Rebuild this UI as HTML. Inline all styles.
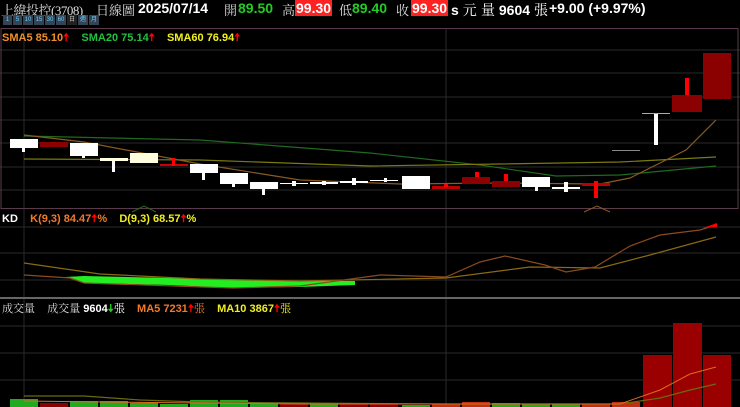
<!DOCTYPE html><html><head><meta charset="utf-8"><style>
body{margin:0;background:#000;width:740px;height:407px;overflow:hidden;font-family:"Liberation Sans","Noto Sans CJK TC",sans-serif}
.t{position:absolute;white-space:nowrap;font-weight:bold}
.c{font-family:"Noto Serif CJK SC","Noto Sans CJK TC",serif;font-weight:normal}
.b{display:inline-block;background:#345;color:#6cf;font-size:6px;height:10px;line-height:10px;text-align:center;width:10px}
</style></head><body>
<svg width="740" height="407" style="position:absolute;left:0;top:0">
<g stroke="#2a2a2a" stroke-width="1">
<line x1="0" y1="50" x2="740" y2="50"/><line x1="0" y1="73" x2="740" y2="73"/><line x1="0" y1="97" x2="740" y2="97"/><line x1="0" y1="120" x2="740" y2="120"/><line x1="0" y1="143" x2="740" y2="143"/><line x1="0" y1="167" x2="740" y2="167"/><line x1="0" y1="190" x2="740" y2="190"/>
<line x1="0" y1="227" x2="740" y2="227"/><line x1="0" y1="253" x2="740" y2="253"/><line x1="0" y1="280" x2="740" y2="280"/>
<line x1="0" y1="326" x2="740" y2="326"/><line x1="0" y1="353" x2="740" y2="353"/><line x1="0" y1="380" x2="740" y2="380"/>
<line x1="24" y1="29" x2="24" y2="407"/><line x1="446" y1="29" x2="446" y2="407"/>
</g>
<rect x="1" y="28.5" width="737" height="180" fill="none" stroke="#5a3a4a"/>
<line x1="0" y1="298" x2="740" y2="298" stroke="#666" stroke-width="2"/>
<polyline fill="none" stroke="#1f6a1f" stroke-width="1.2" points="24,136 200,140 370,153 480,165 556,176 620,175 716,166"/>
<polyline fill="none" stroke="#7a7a10" stroke-width="1.2" points="24,159 200,160 370,166 500,164 620,162 716,157"/>
<polyline fill="none" stroke="#8a5a20" stroke-width="1.2" points="24,135 84,142 200,164 300,180 400,184 500,183 600,184 630,178 686,150 716,120"/>
<g fill="#fff">
<rect x="10" y="139" width="28" height="9"/><rect x="22" y="148" width="3" height="4"/>
<rect x="70" y="143" width="28" height="13"/><rect x="82" y="156" width="3" height="2"/>
<rect x="100" y="158" width="28" height="3" fill="#ffffe0"/><rect x="112" y="161" width="3" height="11"/>
<rect x="130" y="153" width="28" height="10" fill="#ffffe0"/>
<rect x="190" y="164" width="28" height="9"/><rect x="202" y="173" width="3" height="7"/>
<rect x="220" y="173" width="28" height="11"/><rect x="232" y="184" width="3" height="3"/>
<rect x="250" y="182" width="28" height="7"/><rect x="262" y="189" width="3" height="6"/>
<rect x="280" y="183" width="28" height="1"/><rect x="292" y="181" width="4" height="5"/>
<rect x="310" y="182" width="28" height="2"/><rect x="322" y="181" width="4" height="4"/>
<rect x="340" y="181" width="28" height="2"/><rect x="352" y="178" width="4" height="7"/>
<rect x="370" y="180" width="28" height="1"/><rect x="384" y="178" width="3" height="4"/>
<rect x="402" y="176" width="28" height="13"/>
<rect x="522" y="177" width="28" height="10"/><rect x="535" y="187" width="3" height="4"/>
<rect x="552" y="187" width="28" height="2"/><rect x="564" y="182" width="4" height="10"/>
<rect x="642" y="113" width="28" height="1" fill="#aaa"/><rect x="654" y="114" width="4" height="31"/>
<rect x="612" y="150" width="28" height="1" fill="#888"/>
</g>
<g fill="#8b0000">
<rect x="40" y="142" width="28" height="5"/>
<rect x="160" y="164" width="28" height="2" fill="#c00"/><rect x="172" y="158" width="3" height="8" fill="#f00"/>
<rect x="432" y="186" width="28" height="3" fill="#b00"/><rect x="444" y="184" width="4" height="3" fill="#f00"/>
<rect x="462" y="177" width="28" height="7"/><rect x="475" y="172" width="4" height="5" fill="#f00"/>
<rect x="492" y="181" width="28" height="6"/><rect x="504" y="174" width="4" height="7" fill="#f00"/>
<rect x="582" y="183" width="28" height="3" fill="#b00"/><rect x="594" y="181" width="4" height="17" fill="#f00"/>
<rect x="672" y="95" width="30" height="17"/><rect x="685" y="78" width="4" height="17" fill="#f00"/>
<rect x="703" y="53" width="28" height="46"/>
</g>
<polyline fill="none" stroke="#1f6a1f" points="132,212 144,206 156,212"/>
<polyline fill="none" stroke="#8a5a20" points="584,212 597,206 610,212"/>
<polygon fill="#22ee22" points="65,277 84,283 170,285 233,288 300,287 355,285 355,281 300,281 233,280 170,278 84,276"/>
<polyline fill="none" stroke="#8a6a10" stroke-width="1.2" points="24,263 100,274 200,279 300,281 446,278 530,267 600,268 650,255 716,237"/>
<polyline fill="none" stroke="#8a4a20" stroke-width="1.2" points="24,275 70,278 84,283 233,288 300,286 380,275 446,277 480,262 505,256 545,265 566,272 595,267 630,246 660,235 700,230 716,225"/>
<polygon fill="#f00" points="703,228 717,223 717,227"/>
<g>
<rect x="10" y="399" width="28" height="8" fill="#22aa22"/><rect x="40" y="403" width="28" height="4" fill="#8b0000"/>
<rect x="70" y="401" width="28" height="6" fill="#22aa22"/><rect x="100" y="401" width="28" height="6" fill="#22aa22"/>
<rect x="130" y="403" width="28" height="4" fill="#22aa22"/><rect x="160" y="404" width="28" height="3" fill="#22aa22"/>
<rect x="190" y="400" width="28" height="7" fill="#22aa22"/><rect x="220" y="400" width="28" height="7" fill="#22aa22"/>
<rect x="250" y="403" width="28" height="4" fill="#22aa22"/><rect x="280" y="403" width="28" height="4" fill="#8b0000"/>
<rect x="310" y="404" width="28" height="3" fill="#22aa22"/><rect x="340" y="404" width="28" height="3" fill="#8b0000"/>
<rect x="370" y="404" width="28" height="3" fill="#8b0000"/><rect x="402" y="405" width="28" height="2" fill="#22aa22"/>
<rect x="432" y="404" width="28" height="3" fill="#c03010"/><rect x="462" y="402" width="28" height="5" fill="#c03010"/>
<rect x="492" y="403" width="28" height="4" fill="#22aa22"/><rect x="522" y="404" width="28" height="3" fill="#22aa22"/>
<rect x="552" y="404" width="28" height="3" fill="#22aa22"/><rect x="582" y="404" width="28" height="3" fill="#c03010"/>
<rect x="612" y="402" width="28" height="5" fill="#c03010"/>
<rect x="643" y="355" width="29" height="52" fill="#9b0000"/><rect x="673" y="323" width="29" height="84" fill="#9b0000"/><rect x="703" y="355" width="28" height="52" fill="#9b0000"/>
</g>
<polyline fill="none" stroke="#6a6a10" stroke-width="1.2" points="24,396 84,396 140,400 200,402 300,403 446,404 620,404 660,398 690,390 716,384"/>
<polyline fill="none" stroke="#e06a20" stroke-width="1" points="24,401 100,402 200,403 300,404 620,404 660,390 690,374 716,367"/>
</svg>
<div class="t c" style="left:1px;top:0;color:#ddd;font-size:13px;letter-spacing:-0.5px">上緯投控<span style="font-family:'Liberation Serif',serif">(3708)</span></div>
<div class="t c" style="left:96px;top:0;color:#ddd;font-size:13px">日線圖</div>
<div class="t" style="left:138px;top:0;color:#fff;font-size:14px">2025/07/14</div>
<div class="t c" style="left:224px;top:0;color:#ddd;font-size:13px">開</div>
<div class="t" style="left:238px;top:0;color:#22cc22;font-size:14px">89.50</div>
<div class="t c" style="left:282px;top:0;color:#ddd;font-size:13px">高</div>
<div class="t" style="left:295px;top:0;color:#fff;background:#f22;font-size:14px;padding:0 1px">99.30</div>
<div class="t c" style="left:339px;top:0;color:#ddd;font-size:13px">低</div>
<div class="t" style="left:352px;top:0;color:#22cc22;font-size:14px">89.40</div>
<div class="t c" style="left:396px;top:0;color:#ddd;font-size:13px">收</div>
<div class="t" style="left:411px;top:0;color:#fff;background:#f22;font-size:14px;padding:0 1px">99.30</div>
<div class="t" style="left:451px;top:0;color:#fff;font-size:14px">s <span class="c">元</span></div>
<div class="t" style="left:481px;top:0;color:#fff;font-size:14px"><span class="c">量</span> 9604 <span class="c">張</span></div>
<div class="t" style="left:549px;top:0;color:#fff;font-size:14px">+9.00 (+9.97%)</div>
<div style="position:absolute;left:3px;top:15px;display:flex;gap:1px">
<span class="b" style="width:9px">1</span><span class="b" style="width:9px">5</span><span class="b">10</span><span class="b">15</span><span class="b">30</span><span class="b">60</span><span class="b" style="background:#222;color:#ccc">日</span><span class="b">週</span><span class="b">月</span></div>
<div class="t" style="left:2px;top:29px;font-size:11px"><span style="color:#f0902a">SMA5 85.10<span style="color:#f00">🠅</span></span>&nbsp;&nbsp;&nbsp;&nbsp;<span style="color:#22c040">SMA20 75.14<span style="color:#f00">🠅</span></span>&nbsp;&nbsp;&nbsp;&nbsp;<span style="color:#f0f020">SMA60 76.94<span style="color:#f00">🠅</span></span></div>
<div class="t" style="left:2px;top:210px;font-size:11px"><span style="color:#fff">KD</span>&nbsp;&nbsp;&nbsp;&nbsp;<span style="color:#f07a2a">K(9,3) 84.47<span style="color:#f00">🠅</span>%</span>&nbsp;&nbsp;&nbsp;&nbsp;<span style="color:#f0f020">D(9,3) 68.57<span style="color:#f00">🠅</span>%</span></div>
<div class="t" style="left:2px;top:300px;font-size:11px"><span class="c" style="color:#ddd">成交量</span>&nbsp;&nbsp;&nbsp;&nbsp;<span class="c" style="color:#ddd">成交量</span> <span style="color:#fff">9604<span style="color:#2c2">🠇</span><span class="c">張</span></span>&nbsp;&nbsp;&nbsp;&nbsp;<span style="color:#f07a2a">MA5 7231<span style="color:#f00">🠅</span><span class="c">張</span></span>&nbsp;&nbsp;&nbsp;&nbsp;<span style="color:#f0f020">MA10 3867<span style="color:#f00">🠅</span><span class="c">張</span></span></div>
</body></html>
